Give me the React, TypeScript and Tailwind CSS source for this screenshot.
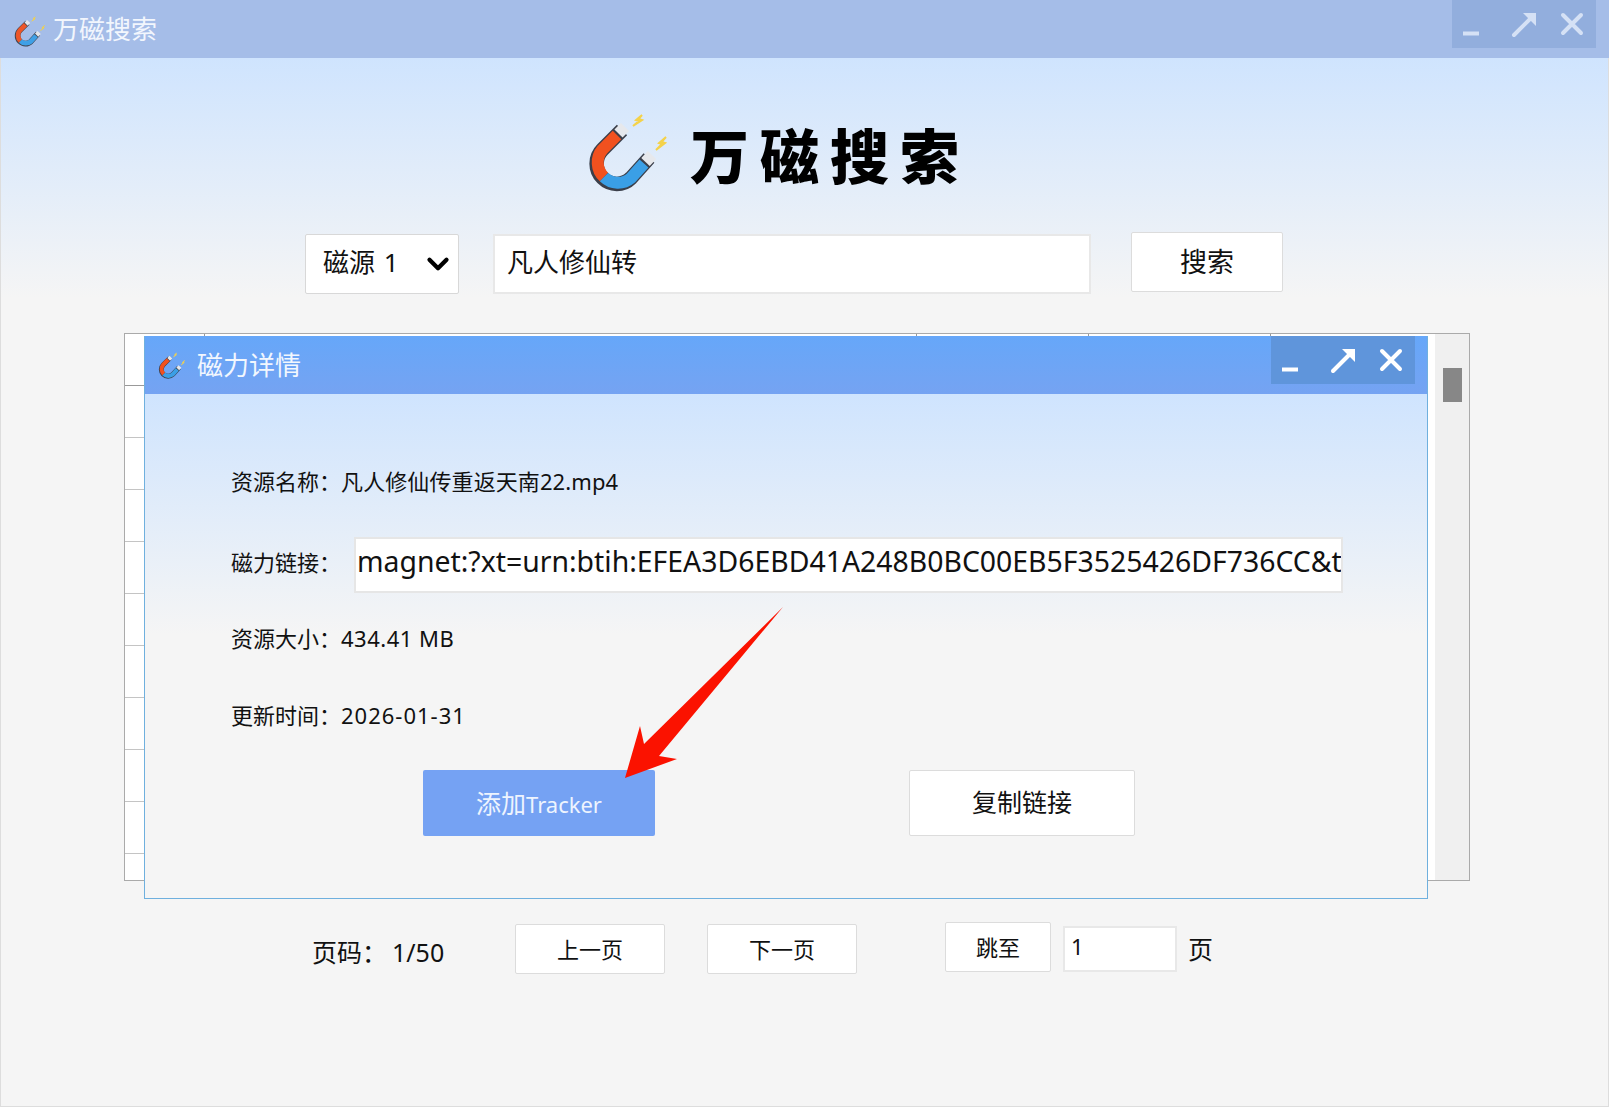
import React from 'react';
import { ChevronDown } from 'lucide-react';

const MagnetLogo = ({ className }: { className?: string }) => (
  <svg viewBox="0 0 95 95" className={className} fill="none">
    <path d="M70 15 L64 20 L67 21 L61 26 L70 20 L66.5 19 Z" fill="#f4d24a" stroke="#f4d24a" strokeWidth="2" />
    <path d="M94 37 L87 43 L90 44 L84 50 L93 43 L89.5 42 Z" fill="#f4d24a" stroke="#f4d24a" strokeWidth="2" />
    <path
      d="M50 30 L30.5 49.5 A20 20 0 0 0 59 78 L77 58"
      stroke="#3b3f4a"
      strokeWidth="14.5"
    />
    <path d="M45 35 L30.5 49.5 A20 20 0 0 0 32 77" stroke="#f1511f" strokeWidth="12" />
    <path d="M32 77 A20 20 0 0 0 59 78 L72 63.5" stroke="#3a9fe6" strokeWidth="12" />
    <path d="M46.5 33.5 L53 27" stroke="#e6e8ec" strokeWidth="11.5" />
    <path d="M73.5 62 L80 55" stroke="#e6e8ec" strokeWidth="11.5" />
  </svg>
);

const WindowControls = ({ className, color }: { className: string; color: string }) => (
  <div className={className}>
    <svg width="144" height="48" viewBox="0 0 144 48" fill="none" stroke={color} strokeWidth="4">
      <path d="M11 33.5 H27" />
      <path d="M62 35 L81 16" strokeLinecap="round" />
      <path d="M71 13 H84 V26 Z" fill={color} stroke="none" />
      <path d="M111 15 L129 33 M129 15 L111 33" strokeLinecap="round" />
    </svg>
  </div>
);

const WhiteButton = ({ className, children }: { className: string; children: React.ReactNode }) => (
  <div
    className={`flex items-center justify-center rounded-[2px] border border-[#dcdcdc] bg-white text-[#111] ${className}`}
  >
    {children}
  </div>
);

const DetailRow = ({ label, value, valueClass }: { label: string; value: string; valueClass?: string }) => (
  <div className="flex items-center text-[22px] leading-[30px] text-[#111]">
    <span>{label}：</span>
    <span className={valueClass}>{value}</span>
  </div>
);

const TableMock = () => (
  <div className="ml-[123px] mt-[39px] flex h-[548px] w-[1346px] border border-[#aaa] bg-white">
    <div className="min-w-0 flex-1 overflow-hidden">
      <div className="flex h-[52px] w-[1296px] border-b border-[#999]">
        <div className="w-[80px] border-r border-[#999]" />
        <div className="w-[712px] border-r border-[#999]" />
        <div className="w-[172px] border-r border-[#999]" />
        <div className="w-[182px] border-r border-[#999]" />
      </div>
      {[0, 1, 2, 3, 4, 5, 6, 7, 8].map((i) => (
        <div key={i} className="h-[52px] w-[1296px] border-b border-[#c4c4c4]" />
      ))}
    </div>
    <div className="w-[34px] shrink-0 bg-[#f0f0f0] pl-[8px] pt-[34px]">
      <div className="h-[34px] w-[19px] bg-[#878787]" />
    </div>
  </div>
);

const Pagination = () => (
  <div className="mt-[41px] flex items-start pl-[311px] text-[#111]">
    <div className="mt-[12px] flex h-[38px] w-[203px] items-center text-[25px]">
      <span>页码：</span>
      <span className="ml-[5px]">1/50</span>
    </div>
    <WhiteButton className="mt-[2px] h-[50px] w-[150px] text-[22px]">上一页</WhiteButton>
    <WhiteButton className="ml-[42px] mt-[2px] h-[50px] w-[150px] text-[22px]">下一页</WhiteButton>
    <WhiteButton className="ml-[88px] h-[50px] w-[106px] text-[22px]">跳至</WhiteButton>
    <div className="ml-[12px] mt-[4px] h-[46px] w-[114px] border-2 border-[#e8e8e8] bg-white pl-[6px] text-[22px] leading-[36px]">
      1
    </div>
    <span className="ml-[11px] mt-[9px] text-[25px] leading-[36px]">页</span>
  </div>
);

const DetailDialog = () => (
  <div className="absolute left-[144px] top-[336px] flex h-[563px] w-[1284px] flex-col border border-t-0 border-[#6fb0de] bg-[#f5f5f5]">
    <div className="relative flex h-[58px] shrink-0 items-center bg-[linear-gradient(#66a7f9,#75a3f2)] pl-[8px]">
      <MagnetLogo className="h-[32px] w-[32px] -mt-[2px]" />
      <span className="ml-[12px] text-[26px] text-[#f2f7fe]">磁力详情</span>
      <WindowControls className="absolute right-[12px] top-0 h-[48px] w-[144px] bg-[#5f95db]" color="#ffffff" />
    </div>
    <div className="flex-1 bg-[linear-gradient(#cfe4fe_0px,#f5f5f5_240px)] pl-[86px] pt-[72px]">
      <DetailRow label="资源名称" value="凡人修仙传重返天南22.mp4" valueClass="tracking-[0.1px]" />
      <div className="mt-[41px] flex items-center text-[22px] text-[#111]">
        <span className="-mt-[6px]">磁力链接：</span>
        <div className="ml-[13px] h-[56px] w-[989px] shrink-0 overflow-hidden whitespace-nowrap border-2 border-[#e6e6e6] bg-white pl-[1px] text-[28.4px] leading-[44px]">
          magnet:?xt=urn:btih:EFEA3D6EBD41A248B0BC00EB5F3525426DF736CC&amp;t
        </div>
      </div>
      <div className="mt-[30px]">
        <DetailRow label="资源大小" value="434.41 MB" valueClass="tracking-[0.5px]" />
      </div>
      <div className="mt-[47px]">
        <DetailRow label="更新时间" value="2026-01-31" valueClass="tracking-[1px]" />
      </div>
      <div className="mt-[40px] flex">
        <div className="ml-[192px] flex h-[66px] w-[232px] items-center justify-center rounded-[2px] bg-[#75a2f3] pt-[2px] text-[#eef4fe]">
          <span className="text-[25px]">添加</span>
          <span className="text-[22px]">Tracker</span>
        </div>
        <WhiteButton className="ml-[254px] h-[66px] w-[226px] text-[25px]">复制链接</WhiteButton>
      </div>
    </div>
  </div>
);

export default function App() {
  return (
    <div className="relative flex h-[1107px] w-[1609px] flex-col overflow-hidden bg-[#f5f5f5] font-['Noto_Sans','Noto_Sans_CJK_SC',sans-serif]">
      <div className="relative flex h-[58px] shrink-0 items-center bg-[#a5bde8] pl-[8px]">
        <MagnetLogo className="h-[37px] w-[37px] opacity-95" />
        <span className="ml-[8px] text-[26px] text-[#f2f6fd]">万磁搜索</span>
        <WindowControls className="absolute right-[13px] top-0 h-[48px] w-[144px] bg-[#92aedd]" color="#d5e1f5" />
      </div>
      <div className="flex-1 border-x border-b border-[#ddd] bg-[linear-gradient(#cfe4fe_0px,#f5f5f5_240px)]">
        <div className="flex h-[137px] items-start pl-[571px] pt-[42px]">
          <MagnetLogo className="h-[95px] w-[95px]" />
          <span className="ml-[23px] mt-[9px] text-[59px] font-black leading-[95px] tracking-[11px] text-black">
            万磁搜索
          </span>
        </div>
        <div className="mt-[37px] flex items-start pl-[304px]">
          <div className="mt-[2px] flex h-[60px] w-[154px] items-center justify-between rounded-[2px] border border-[#d8d8d8] bg-white pl-[17px] pr-[3px] text-[26px] text-[#111]">
            <span className="-mt-[3px] whitespace-pre">
              磁源 <span className="ml-[2px]">1</span>
            </span>
            <ChevronDown className="h-[34px] w-[34px] text-black" strokeWidth={3} />
          </div>
          <div className="ml-[34px] mt-[2px] h-[60px] w-[598px] border-2 border-[#e8e8e8] bg-white pl-[12px] text-[26px] leading-[52px] text-[#111]">
            凡人修仙转
          </div>
          <WhiteButton className="ml-[40px] h-[60px] w-[152px] text-[27px]">搜索</WhiteButton>
        </div>
        <TableMock />
        <Pagination />
      </div>
      <DetailDialog />
      <svg className="absolute left-0 top-0 h-[1107px] w-[1609px]" viewBox="0 0 1609 1107">
        <polygon points="625,778 640,726 644,744 783,607 659,756 677,759" fill="#fb1200" />
      </svg>
    </div>
  );
}
